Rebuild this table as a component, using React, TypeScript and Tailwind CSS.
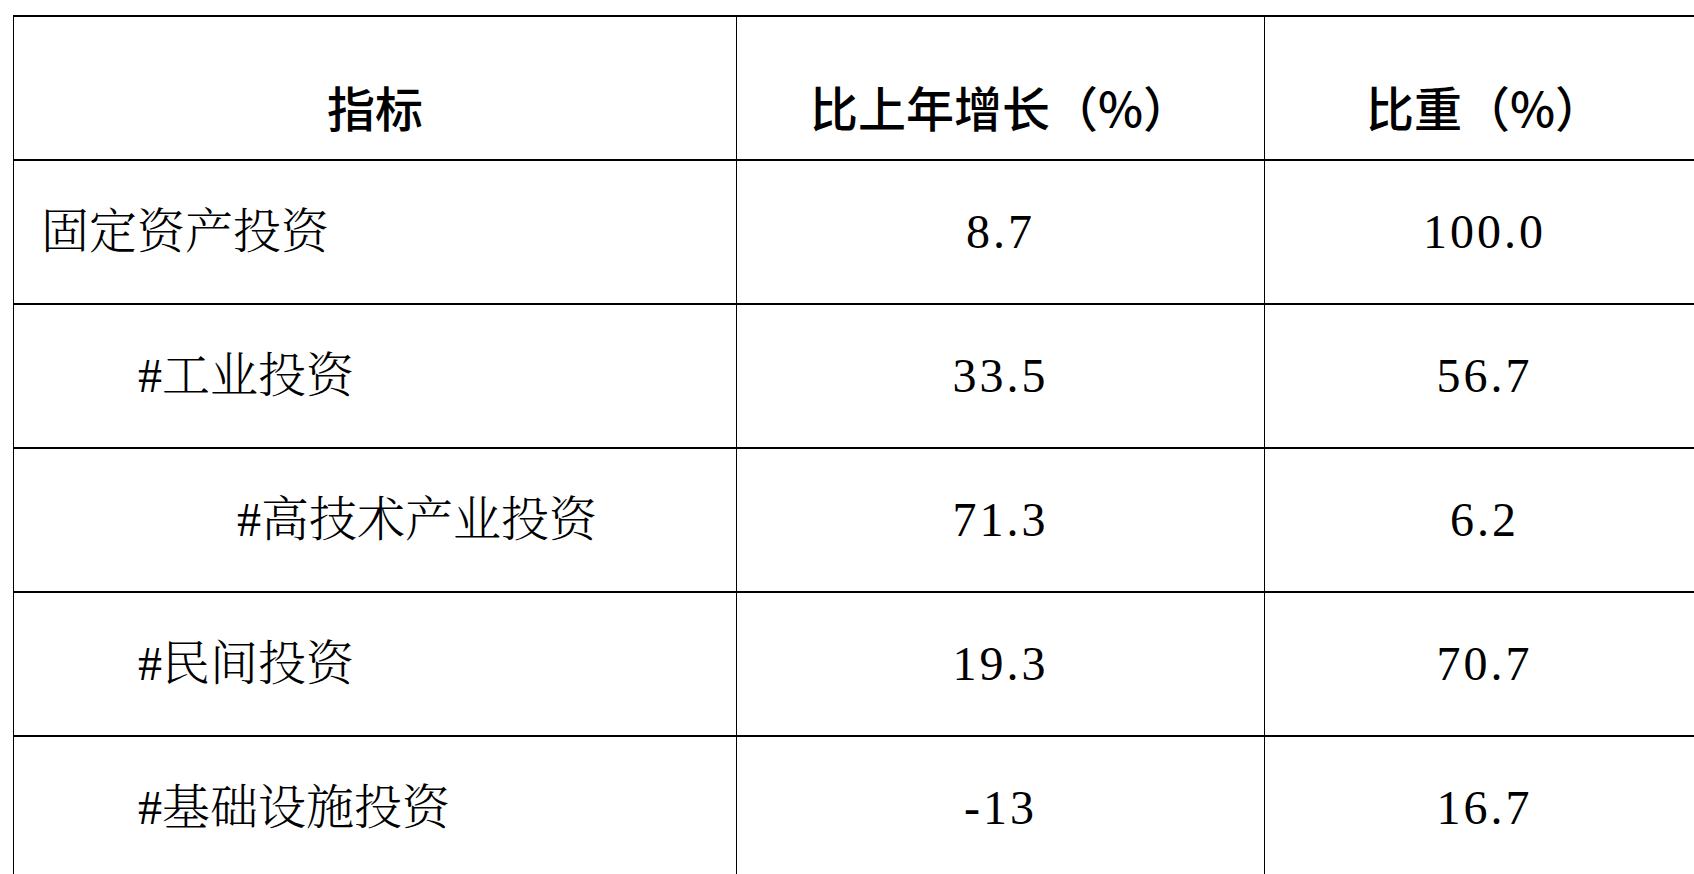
type Row = {
  label: string
  indent: 0 | 1 | 2
  growth: string
  share: string
}

const rows: Row[] = [
  { label: "固定资产投资", indent: 0, growth: "8.7", share: "100.0" },
  { label: "#工业投资", indent: 1, growth: "33.5", share: "56.7" },
  { label: "#高技术产业投资", indent: 2, growth: "71.3", share: "6.2" },
  { label: "#民间投资", indent: 1, growth: "19.3", share: "70.7" },
  { label: "#基础设施投资", indent: 1, growth: "-13", share: "16.7" },
]

const indentClass = {
  0: "pl-[27px]",
  1: "pl-[124px]",
  2: "pl-[223px]",
}

const headFont = "font-['Noto_Sans_CJK_SC',sans-serif] font-medium"
const bodyFont = "font-['Liberation_Serif','Noto_Serif_CJK_SC','Noto_Sans_CJK_SC',serif] font-light"
const cell = "border-y-2 border-x border-black align-middle"

export default function App() {
  return (
    <div className="w-[1694px] h-[874px] overflow-hidden bg-white">
      <table className="ml-[13px] mt-[15px] w-[1691px] table-fixed border-collapse text-black text-[48px] leading-none">
        <colgroup>
          <col className="w-[723px]" />
          <col className="w-[528px]" />
          <col className="w-[440px]" />
        </colgroup>
        <thead>
          <tr className="h-[144px]">
            {["指标", "比上年增长（%）", "比重（%）"].map((h) => (
              <th key={h} className={`${headFont} ${cell} text-center pt-[36px]`}>
                {h}
              </th>
            ))}
          </tr>
        </thead>
        <tbody>
          {rows.map((r) => (
            <tr key={r.label} className="h-[144px]">
              <td className={`${bodyFont} ${cell} ${indentClass[r.indent]} text-left`}>{r.label}</td>
              <td className={`${bodyFont} ${cell} text-center tracking-[3px] font-normal`}>{r.growth}</td>
              <td className={`${bodyFont} ${cell} text-center tracking-[3px] font-normal`}>{r.share}</td>
            </tr>
          ))}
        </tbody>
      </table>
    </div>
  )
}
